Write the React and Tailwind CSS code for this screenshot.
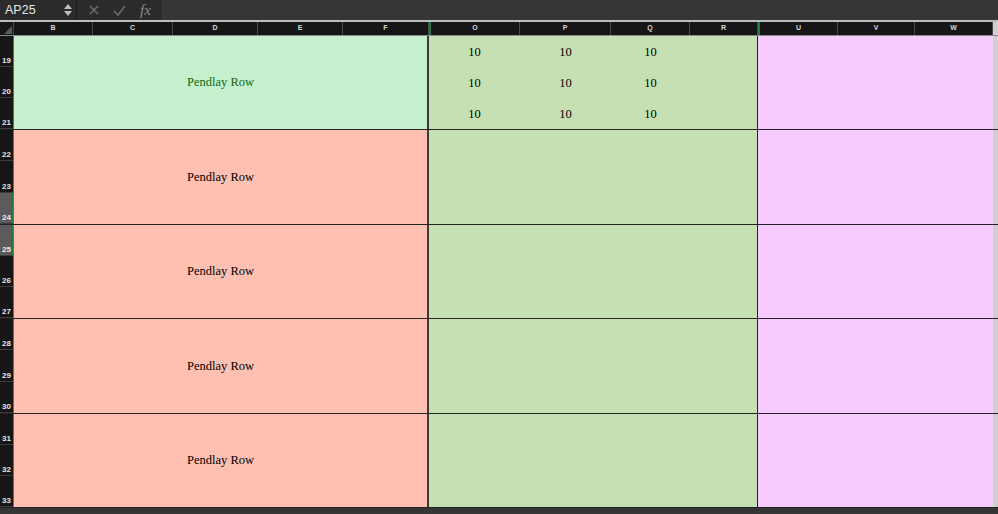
import React from "react";

const leftCols = [
  { name: "B", w: 79 },
  { name: "C", w: 80 },
  { name: "D", w: 85 },
  { name: "E", w: 85 },
  { name: "F", w: 86 },
];
const midCols = [
  { name: "O", w: 91 },
  { name: "P", w: 91 },
  { name: "Q", w: 79 },
  { name: "R", w: 68 },
];
const rightCols = [
  { name: "U", w: 80 },
  { name: "V", w: 77 },
  { name: "W", w: 78 },
];

const groups = [
  { rows: [19, 20, 21], h: 94, first: true },
  { rows: [22, 23, 24], h: 95 },
  { rows: [25, 26, 27], h: 94 },
  { rows: [28, 29, 30], h: 95 },
  { rows: [31, 32, 33], h: 94 },
];

const selected = [24, 25];

const sans = '"Liberation Sans", Arial, sans-serif';
const serif = '"Liberation Serif", "Times New Roman", serif';

function ColHead({ name, w, green }) {
  return (
    <div
      style={{ width: w }}
      className={
        "flex h-full shrink-0 items-center justify-center border-r border-[#4a4a4a] text-[7px] font-bold text-[#d8d8d8] " +
        (green ? "border-l-2 border-l-[#1f7a45]" : "")
      }
    >
      {name}
    </div>
  );
}

function RowHeads({ rows }) {
  return (
    <div
      className="flex w-[14px] shrink-0 flex-col border-r border-[#6a6a6a]"
      style={{ fontFamily: sans }}
    >
      {rows.map((r) => {
        const sel = selected.includes(r);
        return (
          <div
            key={r}
            className={
              "flex flex-1 items-end justify-center border-b border-[#3c3c3c] pb-[1px] text-[8px] font-bold leading-none " +
              (sel
                ? "bg-[#5b5b5b] text-[#f0f0f0] shadow-[inset_-2px_0_0_#1f7a45]"
                : "bg-[#161616] text-[#e4e4e4]")
            }
          >
            {r}
          </div>
        );
      })}
    </div>
  );
}

function Group({ g }) {
  return (
    <div style={{ height: g.h }} className="flex shrink-0 border-b border-[#222]">
      <RowHeads rows={g.rows} />
      <div
        className={
          "flex w-[415px] shrink-0 items-center justify-center border-r-2 border-[#3a3a3a] text-[12.5px] " +
          (g.first ? "bg-[#c6efce] text-[#0b6b12]" : "bg-[#ffc0b2] text-black")
        }
      >
        Pendlay Row
      </div>
      <div className="grid w-[329px] shrink-0 grid-cols-[91px_91px_79px_68px] grid-rows-3 border-r border-[#222] bg-[#c6e0b4] text-[12.5px] text-black">
        {g.first &&
          [0, 1, 2].map((r) =>
            [0, 1, 2, 3].map((c) => (
              <div key={r + "-" + c} className="flex items-center justify-center pt-[1px]">
                {c < 3 ? "10" : ""}
              </div>
            ))
          )}
      </div>
      <div className="w-[235px] shrink-0 bg-[#f8cbfe]" />
      <div className="flex-1 bg-[#cfcfcf]" />
    </div>
  );
}

export default function App() {
  return (
    <div
      className="flex h-[514px] w-[998px] flex-col overflow-hidden bg-[#333]"
      style={{ fontFamily: serif }}
    >
      {/* barra de fórmulas */}
      <div className="flex h-[20px] shrink-0 items-center bg-[#2b2b2b]" style={{ fontFamily: sans }}>
        <div className="flex h-full w-[77px] items-center justify-between border-r border-[#1e1e1e] pl-[5px] pr-[4px]">
          <span className="text-[12.5px] text-[#e6e6e6]">AP25</span>
          <div className="flex flex-col items-center gap-[2px]">
            <svg width="8" height="5" viewBox="0 0 8 5">
              <path d="M0 5 L4 0 L8 5 Z" fill="#bdbdbd" />
            </svg>
            <svg width="8" height="5" viewBox="0 0 8 5">
              <path d="M0 0 L4 5 L8 0 Z" fill="#bdbdbd" />
            </svg>
          </div>
        </div>
        <div className="flex h-full w-[85px] items-center gap-[14px] pl-[12px]">
          <svg width="10" height="10" viewBox="0 0 10 10">
            <path d="M1 1 L9 9 M9 1 L1 9" stroke="#6c6c6c" strokeWidth="1.6" />
          </svg>
          <svg width="13" height="11" viewBox="0 0 13 11">
            <path d="M1 6 L5 10 L12 1" stroke="#6c6c6c" strokeWidth="1.6" fill="none" />
          </svg>
          <span className="text-[15px] italic leading-none text-[#8a8a8a]" style={{ fontFamily: serif }}>
            fx
          </span>
        </div>
        <div className="h-full flex-1 bg-[#363636]" />
      </div>
      <div className="h-[2px] shrink-0 bg-[#bdbdbd]" />

      {/* cabecera de columnas */}
      <div className="flex h-[14px] shrink-0 border-b border-[#8a8a8a] bg-[#161616]" style={{ fontFamily: sans }}>
        <div className="relative w-[14px] shrink-0 border-r border-[#4a4a4a]">
          <svg className="absolute bottom-[1px] right-[1px]" width="8" height="8" viewBox="0 0 8 8">
            <path d="M8 0 L8 8 L0 8 Z" fill="#5a5a5a" />
          </svg>
        </div>
        {leftCols.map((c) => (
          <ColHead key={c.name} {...c} />
        ))}
        {midCols.map((c, i) => (
          <ColHead key={c.name} {...c} green={i === 0} />
        ))}
        {rightCols.map((c, i) => (
          <ColHead key={c.name} {...c} green={i === 0} />
        ))}
        <div className="flex-1 bg-[#cfcfcf]" />
      </div>

      {/* filas */}
      <div>
        {groups.map((g) => (
          <Group key={g.rows[0]} g={g} />
        ))}
      </div>
      <div className="flex-1 bg-[#353535]" />
    </div>
  );
}
